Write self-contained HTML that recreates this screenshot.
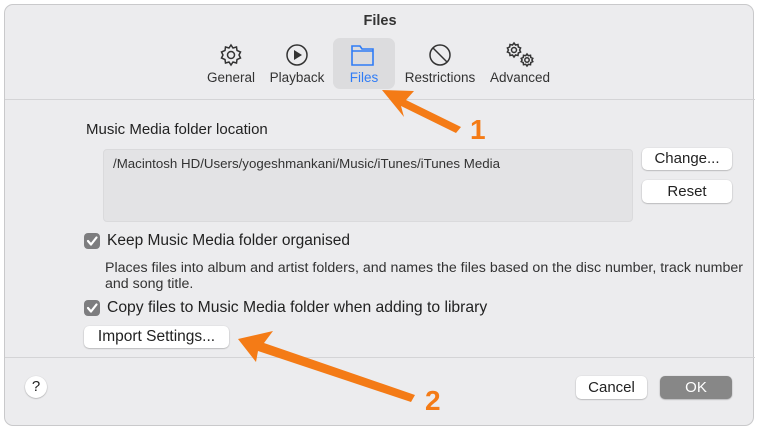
<!DOCTYPE html>
<html><head><style>
body{margin:0;width:760px;height:431px;background:#fff;font-family:"Liberation Sans",sans-serif;position:relative;overflow:hidden}
.win{position:absolute;left:4px;top:4px;width:750px;height:422px;background:#ececee;border:1px solid #c9c9cb;border-radius:9px;box-sizing:border-box}
.a{position:absolute;white-space:nowrap}
.btn{position:absolute;background:#fff;border-radius:5px;box-shadow:0 0.5px 1.5px rgba(0,0,0,.35);font-size:15px;color:#222;text-align:center;box-sizing:border-box}
.cb{position:absolute;width:16px;height:16px;background:#7d7d7f;border-radius:4px}
</style></head><body>
<div class="win"></div>
<div class="a" style="left:0;width:760px;text-align:center;top:13px;font-size:14.5px;font-weight:bold;color:#333">Files</div>
<div class="a" style="left:333px;top:38px;width:62px;height:51px;background:#dcdcde;border-radius:7px"></div>
<svg class="a" style="left:0;top:0" width="760" height="100">
 <g fill="none" stroke="#333" stroke-width="1.5">
  <circle cx="231" cy="55" r="3.5"/>
  <path d="M231 45l2 3 3.5-1 .5 3.5 3.5 1.5-1.5 3 1.5 3-3.5 1.5-.5 3.5-3.5-1-2 3-2-3-3.5 1-.5-3.5-3.5-1.5 1.5-3-1.5-3 3.5-1.5.5-3.5 3.5 1z"/>
  <circle cx="297" cy="55" r="10"/>
  <circle cx="440" cy="55" r="10"/><path d="M433 48l14 14"/>
  <circle cx="514" cy="50" r="2.5"/><path d="M514 43l1.5 2 2.5-.5.3 2.5 2.3 1-1 2 1 2-2.3 1-.3 2.5-2.5-.5-1.5 2-1.5-2-2.5.5-.3-2.5-2.3-1 1-2-1-2 2.3-1 .3-2.5 2.5.5z"/>
  <circle cx="527" cy="60" r="2.2"/><path d="M527 54l1.3 1.7 2.2-.4.3 2.2 2 .9-.9 1.6.9 1.6-2 .9-.3 2.2-2.2-.4-1.3 1.7-1.3-1.7-2.2.4-.3-2.2-2-.9.9-1.6-.9-1.6 2-.9.3-2.2 2.2.4z"/>
 </g>
 <path d="M294 50v10l8-5z" fill="#333"/>
 <g fill="none" stroke="#2f7cf6" stroke-width="1.6"><path d="M352 46h8l2 3h11v16h-21z"/><path d="M352 51h21"/></g>
 <g font-size="13.5" fill="#333" text-anchor="middle" font-family="Liberation Sans">
  <text x="231" y="82">General</text><text x="297" y="82">Playback</text><text x="364" y="82" fill="#2f7cf6">Files</text><text x="440" y="82">Restrictions</text><text x="520" y="82">Advanced</text>
 </g>
</svg>
<div class="a" style="left:5px;width:750px;top:99px;height:1px;background:#d4d4d6"></div>
<div class="a" style="left:5px;width:750px;top:357px;height:1px;background:#d4d4d6"></div>
<div class="a" style="left:86px;top:121px;font-size:15px;color:#222">Music Media folder location</div>
<div class="a" style="left:103px;top:149px;width:530px;height:73px;background:#e3e3e5;border-radius:4px;border:1px solid #dadadc;box-sizing:border-box"></div>
<div class="a" style="left:113px;top:156px;font-size:13.3px;color:#333">/Macintosh HD/Users/yogeshmankani/Music/iTunes/iTunes Media</div>
<div class="btn" style="left:642px;top:148px;width:90px;height:22px;line-height:22px">Change...</div>
<div class="btn" style="left:642px;top:180px;width:90px;height:23px;line-height:23px">Reset</div>
<div class="cb" style="left:84px;top:233px"></div>
<div class="cb" style="left:84px;top:300px"></div>
<svg class="a" style="left:0;top:0" width="120" height="330"><g fill="none" stroke="#fff" stroke-width="2.2" stroke-linecap="round" stroke-linejoin="round"><path d="M88 241l3 3.5 5.5-7"/><path d="M88 308l3 3.5 5.5-7"/></g></svg>
<div class="a" style="left:107px;top:232px;font-size:15.5px;color:#222">Keep Music Media folder organised</div>
<div class="a" style="left:105px;top:260px;line-height:16px;font-size:14.2px;color:#333">Places files into album and artist folders, and names the files based on the disc number, track number<br>and song title.</div>
<div class="a" style="left:107px;top:299px;font-size:15.7px;color:#222">Copy files to Music Media folder when adding to library</div>
<div class="btn" style="left:84px;top:326px;width:145px;height:22px;line-height:22px;font-size:15.5px">Import Settings...</div>
<div class="btn" style="left:25px;top:376px;width:22px;height:22px;line-height:22px;border-radius:50%">?</div>
<div class="btn" style="left:576px;top:376px;width:71px;height:23px;line-height:23px">Cancel</div>
<div class="btn" style="left:660px;top:376px;width:72px;height:23px;line-height:23px;background:#878787;color:#fff">OK</div>
<svg class="a" style="left:0;top:0" width="760" height="431">
 <g fill="#f47b16">
  <path d="M382 90L414 91L406 100L461 127L456 133L401 106L404 117Z"/>
  <path d="M238 339L273 331L264 343L415 395L411 402L258 351L256 362Z"/>
 </g>
 <g font-family="Liberation Sans" font-weight="bold" font-size="28" fill="#f47b16">
  <text x="470" y="139">1</text><text x="425" y="410">2</text>
 </g>
</svg>
</body></html>
